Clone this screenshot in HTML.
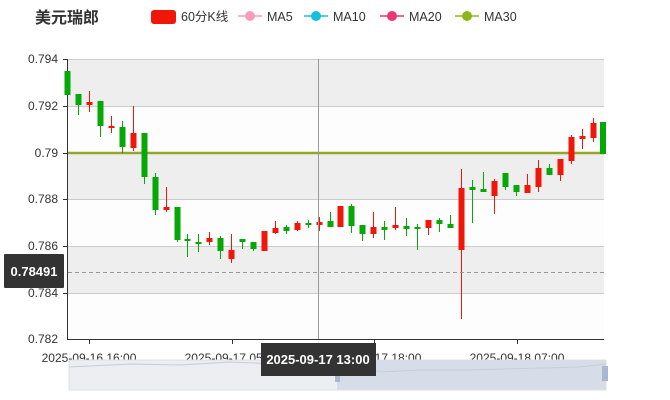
<!DOCTYPE html>
<html><head><meta charset="utf-8"><style>
html,body{margin:0;padding:0;background:#fff;width:670px;height:400px;overflow:hidden}
svg{display:block;font-family:"Liberation Sans","Noto Sans CJK SC",sans-serif}
</style></head><body>
<svg width="670" height="400" viewBox="0 0 670 400" xmlns="http://www.w3.org/2000/svg">
<text x="35" y="23" font-size="16" font-weight="bold" fill="#333">美元瑞郎</text>
<rect x="151" y="10" width="25" height="14" rx="3" fill="#f0160a"/>
<text x="181" y="21" font-size="12.5" fill="#333">60分K线</text>
<line x1="238" y1="16" x2="262" y2="16" stroke="#f89cb7" stroke-width="1.5"/><circle cx="250" cy="16" r="5" fill="#f89cb7"/>
<text x="267" y="21" font-size="12.5" fill="#333">MA5</text>
<line x1="304" y1="16" x2="328" y2="16" stroke="#19bedb" stroke-width="1.5"/><circle cx="316" cy="16" r="5" fill="#19bedb"/>
<text x="333" y="21" font-size="12.5" fill="#333">MA10</text>
<line x1="380" y1="16" x2="404" y2="16" stroke="#ec3571" stroke-width="1.5"/><circle cx="392" cy="16" r="5" fill="#ec3571"/>
<text x="409" y="21" font-size="12.5" fill="#333">MA20</text>
<line x1="455" y1="16" x2="479" y2="16" stroke="#92b516" stroke-width="1.5"/><circle cx="467" cy="16" r="5" fill="#92b516"/>
<text x="484" y="21" font-size="12.5" fill="#333">MA30</text>

<rect x="68" y="59" width="536" height="47" fill="#eeeeee"/>
<rect x="68" y="106" width="536" height="47" fill="#fdfdfd"/>
<rect x="68" y="153" width="536" height="46" fill="#eeeeee"/>
<rect x="68" y="199" width="536" height="47" fill="#fdfdfd"/>
<rect x="68" y="246" width="536" height="47" fill="#eeeeee"/>
<rect x="68" y="293" width="536" height="46" fill="#fdfdfd"/>
<g stroke="#ccc" stroke-width="1">
<line x1="68" y1="59.5" x2="604" y2="59.5"/><line x1="68" y1="106.5" x2="604" y2="106.5"/>
<line x1="68" y1="199.5" x2="604" y2="199.5"/><line x1="68" y1="246.5" x2="604" y2="246.5"/>
<line x1="68" y1="293.5" x2="604" y2="293.5"/>
</g>
<g stroke="#333" stroke-width="1">
<line x1="67.5" y1="59" x2="67.5" y2="340"/><line x1="67" y1="339.5" x2="604" y2="339.5"/>
<line x1="63" y1="59.5" x2="68" y2="59.5"/><line x1="63" y1="106.5" x2="68" y2="106.5"/><line x1="63" y1="153.5" x2="68" y2="153.5"/>
<line x1="63" y1="199.5" x2="68" y2="199.5"/><line x1="63" y1="246.5" x2="68" y2="246.5"/><line x1="63" y1="293.5" x2="68" y2="293.5"/>
<line x1="89.5" y1="339" x2="89.5" y2="344"/><line x1="232.5" y1="339" x2="232.5" y2="344"/><line x1="374.5" y1="339" x2="374.5" y2="344"/><line x1="517.5" y1="339" x2="517.5" y2="344"/>
</g>
<g font-size="12" fill="#333" text-anchor="end">
<text x="58" y="63">0.794</text><text x="58" y="110">0.792</text><text x="58" y="157">0.79</text>
<text x="58" y="203">0.788</text><text x="58" y="250">0.786</text><text x="58" y="297">0.784</text><text x="58" y="343">0.782</text>
</g>
<g font-size="12" fill="#333" text-anchor="middle">
<text x="89" y="362">2025-09-16 16:00</text><text x="232" y="362">2025-09-17 05:00</text>
<text x="374" y="362">2025-09-17 18:00</text><text x="517" y="362">2025-09-18 07:00</text>
</g>
<line x1="68" y1="153" x2="604" y2="153" stroke="#95a52a" stroke-width="2.5"/>

<path stroke="#f0160a" stroke-width="1" fill="none" d="M89.5 91V112M111.5 116V133M133.5 106V151M166.5 187V212M209.5 232V245M231.5 234V263M264.5 231V251M275.5 221V234M297.5 221V231M319.5 217V231M340.5 206V227M373.5 212V238M395.5 207V230M428.5 220V235M461.5 169V319M494.5 179V214M527.5 174V193M538.5 160V192M560.5 159V181M571.5 135V164M582.5 129V149M593.5 118V142"/>
<g fill="#f0160a">
<rect x="86.5" y="102" width="6" height="3"/><rect x="108.5" y="126" width="6" height="2"/><rect x="130.5" y="133" width="6" height="15"/><rect x="163.5" y="207" width="6" height="3"/><rect x="206.5" y="238" width="6" height="4"/><rect x="228.5" y="250" width="6" height="9"/><rect x="261.5" y="231" width="6" height="20"/><rect x="272.5" y="228" width="6" height="5"/><rect x="294.5" y="223" width="6" height="7"/><rect x="316.5" y="222" width="6" height="3"/><rect x="337.5" y="206" width="6" height="21"/><rect x="370.5" y="227" width="6" height="7"/><rect x="392.5" y="225" width="6" height="3"/><rect x="425.5" y="220" width="6" height="8"/><rect x="458.5" y="188" width="6" height="62"/><rect x="491.5" y="181" width="6" height="15"/><rect x="524.5" y="185" width="6" height="8"/><rect x="535.5" y="168" width="6" height="19"/><rect x="557.5" y="159" width="6" height="16"/><rect x="568.5" y="137" width="6" height="24"/><rect x="579.5" y="136" width="6" height="3"/><rect x="590.5" y="123" width="6" height="15"/>
</g>
<path stroke="#06a806" stroke-width="1" fill="none" d="M78.5 94V115M100.5 101V137M122.5 121V153M144.5 133V184M155.5 173V215M177.5 207V242M187.5 234V257M198.5 234V252M220.5 236V259M242.5 239V249M253.5 242V251M286.5 225V234M308.5 220V228M330.5 212V227M351.5 204V233M362.5 225V241M384.5 221V240M406.5 218V236M417.5 224V250M439.5 218V232M450.5 215V228M472.5 180V223M483.5 172V192M505.5 173V190M516.5 185V196M549.5 164V175"/>
<g fill="#06a806">
<rect x="64.5" y="71" width="6" height="24"/><rect x="75.5" y="94" width="6" height="11"/><rect x="97.5" y="101" width="6" height="25"/><rect x="119.5" y="127" width="6" height="20"/><rect x="141.5" y="133" width="6" height="44"/><rect x="152.5" y="177" width="6" height="33"/><rect x="174.5" y="207" width="6" height="33"/><rect x="184.5" y="239" width="6" height="2"/><rect x="195.5" y="242" width="6" height="2"/><rect x="217.5" y="238" width="6" height="13"/><rect x="239.5" y="239" width="6" height="3"/><rect x="250.5" y="242" width="6" height="7"/><rect x="283.5" y="227" width="6" height="4"/><rect x="305.5" y="223" width="6" height="2"/><rect x="327.5" y="221" width="6" height="6"/><rect x="348.5" y="206" width="6" height="20"/><rect x="359.5" y="225" width="6" height="9"/><rect x="381.5" y="227" width="6" height="3"/><rect x="403.5" y="226" width="6" height="3"/><rect x="414.5" y="227" width="6" height="2"/><rect x="436.5" y="220" width="6" height="4"/><rect x="447.5" y="224" width="6" height="4"/><rect x="469.5" y="187" width="6" height="3"/><rect x="480.5" y="189" width="6" height="3"/><rect x="502.5" y="173" width="6" height="14"/><rect x="513.5" y="185" width="6" height="7"/><rect x="546.5" y="168" width="6" height="7"/><rect x="600" y="122" width="6" height="32"/>
</g>

<line x1="318.5" y1="59" x2="318.5" y2="339" stroke="#999" stroke-width="1"/>
<line x1="68" y1="272.5" x2="604" y2="272.5" stroke="#999" stroke-width="1" stroke-dasharray="4,3"/>

<rect x="69" y="360" width="537" height="30" fill="#eceef1" stroke="#dde0e4"/>
<rect x="337" y="360" width="269" height="30" fill="#d7dde8"/>
<path d="M69,367 L90,366 L130,364 L180,365 L230,362 L280,364 L337,364 L360,367 L380,372 L420,370 L470,370 L540,368 L580,367 L606,364" fill="none" stroke="#c8ccd4" stroke-width="1"/>
<rect x="335" y="369" width="5" height="13" fill="#a8b8d0"/>
<rect x="602" y="366" width="6" height="15" fill="#a8b8d0"/>

<rect x="4" y="254" width="60" height="34" fill="#333" rx="1"/>
<text x="34" y="276" font-size="13" font-weight="bold" fill="#fff" text-anchor="middle">0.78491</text>
<rect x="261" y="343" width="115" height="33" fill="#333"/>
<text x="318" y="364" font-size="13" font-weight="bold" fill="#fff" text-anchor="middle">2025-09-17 13:00</text>
</svg>
</body></html>
